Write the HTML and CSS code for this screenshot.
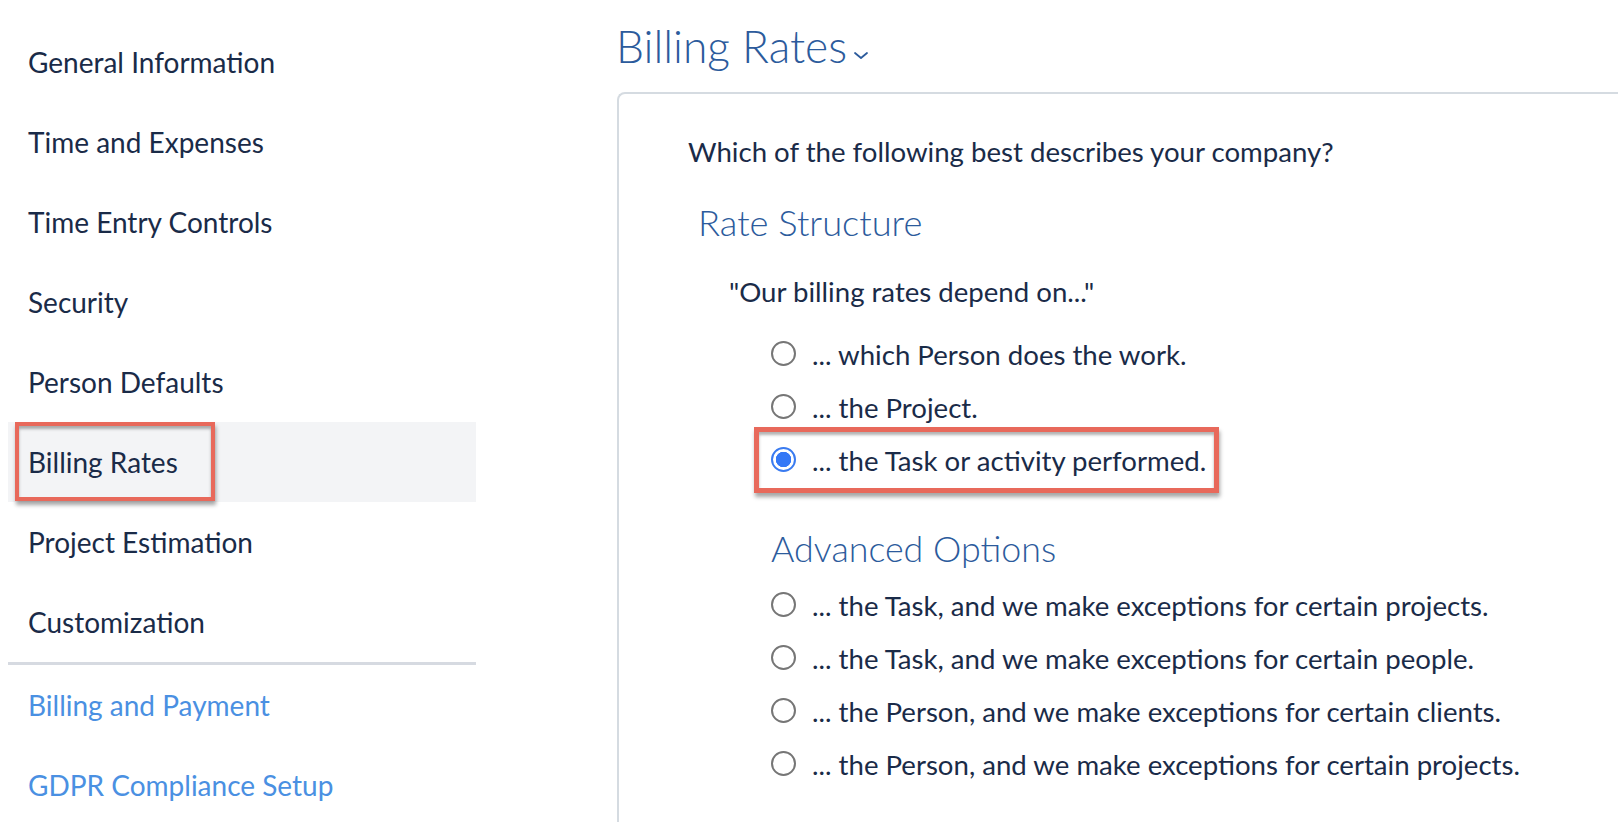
FILE: index.html
```html
<!DOCTYPE html>
<html lang="en">
<head>
    <meta charset="UTF-8">
    <meta name="viewport" content="width=device-width, initial-scale=1.0">
    <title>Billing Rates</title>
    <link rel="stylesheet" href="styles.css">
</head>
<body>
    <!-- left settings menu -->
    <nav class="side-menu">
        <ul class="menu-list">
            <li class="menu-item">General Information</li>
            <li class="menu-item">Time and Expenses</li>
            <li class="menu-item">Time Entry Controls</li>
            <li class="menu-item">Security</li>
            <li class="menu-item">Person Defaults</li>
            <li class="menu-item active"><span class="marked">Billing Rates</span></li>
            <li class="menu-item">Project Estimation</li>
            <li class="menu-item">Customization</li>
        </ul>
        <ul class="menu-list links">
            <li class="menu-item link">Billing and Payment</li>
            <li class="menu-item link">GDPR Compliance Setup</li>
        </ul>
    </nav>

    <main class="page">
        <h1 class="page-title">Billing Rates<svg class="chevron" width="16" height="9" viewBox="0 0 16 9"><path d="M2 2 L8 7 L14 2" fill="none" stroke="#2c5b9c" stroke-width="1.8" stroke-linecap="round" stroke-linejoin="round"/></svg></h1>

        <section class="panel">
            <p class="question">Which of the following best describes your company?</p>
            <h2 class="group-title">Rate Structure</h2>
            <p class="quote">"Our billing rates depend on..."</p>

            <div class="options">
                <label class="option"><span class="radio"></span>... which Person does the work.</label>
                <label class="option"><span class="radio"></span>... the Project.</label>
                <label class="option marked"><span class="radio checked"></span>... the Task or activity performed.</label>
            </div>

            <h2 class="group-title advanced">Advanced Options</h2>
            <div class="options advanced-list">
                <label class="option"><span class="radio"></span>... the Task, and we make exceptions for certain projects.</label>
                <label class="option"><span class="radio"></span>... the Task, and we make exceptions for certain people.</label>
                <label class="option"><span class="radio"></span>... the Person, and we make exceptions for certain clients.</label>
                <label class="option"><span class="radio"></span>... the Person, and we make exceptions for certain projects.</label>
            </div>
        </section>
    </main>
</body>
</html>
```

FILE: styles.css
```css
*, *::before, *::after {
    padding: 0;
    margin: 0;
    box-sizing: border-box;
}

body {
    font-family: Lato, "Open Sans", sans-serif;
    color: #1a2b48;
    background-color: white;
    display: flex;
    height: 822px;
    overflow: hidden;
}

/* side menu */
.side-menu {
    width: 476px;
    padding-left: 8px;
    padding-top: 22px;
    flex-shrink: 0;
}

.menu-list {
    list-style: none;
}

.menu-list.links {
    border-top: 3px solid #d6dae1;
}

.menu-item {
    height: 80px;
    line-height: 80px;
    font-size: 28px;
    padding-left: 20px;
}

.menu-item.active {
    background-color: #f3f4f6;
}

.menu-item.link {
    color: #4a90e2;
}

.menu-item .marked {
    display: inline-block;
    position: relative;
    height: 80px;
}

.menu-item .marked::after {
    content: "";
    position: absolute;
    left: -13px;
    top: 0;
    width: 200px;
    height: 79px;
    border: 4px solid #e8695b;
    box-shadow: 1px 4px 4px rgba(0, 0, 0, 0.35), inset 0 3px 3px rgba(0, 0, 0, 0.3);
}

/* main area */
.page {
    flex: 1;
    margin-left: 141px;
    padding-top: 18px;
}

.page-title {
    font-size: 44.4px;
    font-weight: 300;
    line-height: 56px;
    color: #2c5b9c;
    margin-left: -1px;
}

.chevron {
    margin-left: 6px;
    vertical-align: 3px;
}

.panel {
    margin-top: 18px;
    border: 2px solid #d5dbe1;
    border-right: none;
    border-bottom: none;
    border-top-left-radius: 8px;
    height: 800px;
    padding-top: 38px;
    padding-left: 69px;
}

.question {
    font-size: 27.6px;
    line-height: 40px;
}

.group-title {
    font-size: 36.3px;
    font-weight: 300;
    line-height: 48px;
    color: #2c5b9c;
    margin-top: 26px;
    margin-left: 10px;
}

.quote {
    font-size: 27.6px;
    line-height: 40px;
    margin-top: 26px;
    margin-left: 41px;
}

.options {
    margin-top: 16px;
    margin-left: 83px;
}

.option {
    display: flex;
    align-items: center;
    width: fit-content;
    height: 53px;
    font-size: 27.6px;
    position: relative;
}

.radio {
    width: 25px;
    height: 25px;
    border: 2px solid #767676;
    border-radius: 50%;
    margin-right: 16px;
    margin-top: -3px;
    flex-shrink: 0;
}

.radio.checked {
    border: 2px solid #3a7bf0;
    background: radial-gradient(circle, #3478f6 0 7.5px, white 8px);
}

.option.marked::after {
    content: "";
    position: absolute;
    left: -17px;
    right: -13px;
    top: -7px;
    bottom: -6px;
    border: 5px solid #e8695b;
    box-shadow: 1px 4px 4px rgba(0, 0, 0, 0.35), inset 0 3px 3px rgba(0, 0, 0, 0.3);
}

.group-title.advanced {
    font-size: 35.8px;
    margin-top: 38px;
    margin-left: 83px;
}

.options.advanced-list {
    margin-top: 6px;
}
```
